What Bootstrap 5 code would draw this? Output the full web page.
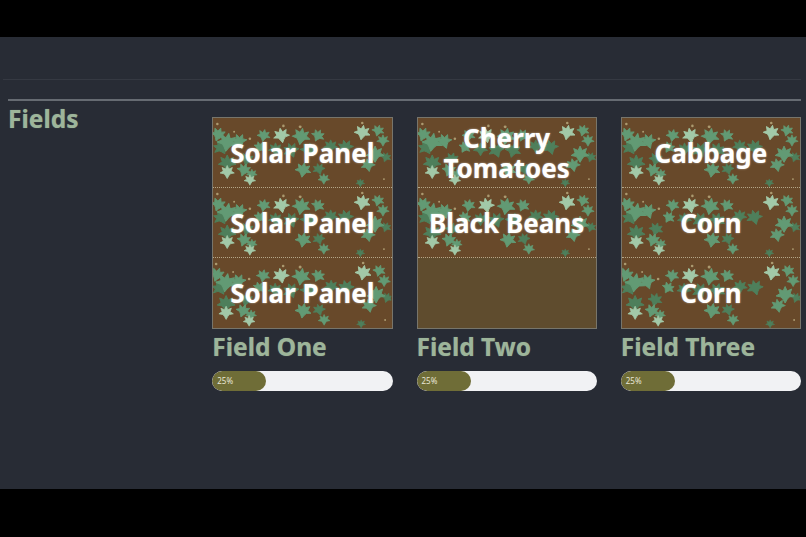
<!doctype html>
<html lang="en"><head><meta charset="utf-8"><title>Fields</title>
<link href="https://cdn.jsdelivr.net/npm/bootstrap@5.3.0/dist/css/bootstrap.min.css" rel="stylesheet">
<style>
html,body{height:100%;overflow:hidden}
body{background:#000;font-family:"Noto Sans","Liberation Sans",sans-serif;padding:37px 0 48px}
.stage{height:100%;background:#282c35;padding:0 5px 0 8px}
.rule-top{margin:0 0 19px -5px;border-top:1px solid #353942;opacity:1}
.rule-main{margin:0 0 2px;border-top:2px solid #666b72;opacity:1}
.spacer{height:42px}
.side-title{color:#9db59a;font-size:24.500px;font-weight:700;line-height:32px;margin:0;text-shadow:0 0 1px rgba(157,181,154,.6)}
.plot{margin-top:14px;border:1px solid #77756b;background:#5f4c2e}
.bed{height:70px;position:relative;border-bottom:1px dotted #b5a789}
.bed:last-child{border-bottom:0}
.bed.sown{background:#68492a}
.ivy{position:absolute;inset:0;width:100%;height:100%;filter:blur(.45px)}
.ivy-leaf{stroke-width:1;stroke-linejoin:round}
.crop{position:relative;height:100%;padding:0 4px;color:#fff;font-weight:700;font-size:26px;line-height:30px;text-align:center;text-shadow:0 0 2px rgba(255,255,255,.6)}
.field-name{color:#9db59a;font-size:24.500px;font-weight:700;line-height:32px;margin:2px 0 8px 0;text-shadow:0 0 1px rgba(157,181,154,.6)}
.meter{height:20px;background:#f1f2f4;border-radius:10px;font-size:8px}
.meter .progress-bar{background:#6f6d37;color:#e8e6d6;align-items:flex-start;padding-left:5px;border-radius:10px}
</style></head><body>
<svg width="0" height="0" class="d-block"><defs>
<path id="lf" class="ivy-leaf" stroke="currentColor" fill="currentColor" d="M0-8.500 2-4 6.500-6 5-1.500 9 1 4 2 2 4.500 0 8-2 4.500-4 2-9 1-5-1.500-6.500-6-2-4Z"/>
<symbol id="ivy" viewBox="0 0 178 70">
<g color="#4e7f5b">
<use href="#lf" transform="translate(7 30) rotate(-30) scale(.9)"/>
<use href="#lf" transform="translate(13 46) scale(1)"/>
<use href="#lf" transform="translate(33 42) rotate(15) scale(.8)"/>
<use href="#lf" transform="translate(62 32) scale(.8)"/>
<use href="#lf" transform="translate(78 33) rotate(-20) scale(.9)"/>
<use href="#lf" transform="translate(95 33) rotate(15) scale(.9)"/>
<use href="#lf" transform="translate(118 29) scale(.8)"/>
<use href="#lf" transform="translate(133 30) rotate(-15) scale(.9)"/>
<use href="#lf" transform="translate(106 52) rotate(-15) scale(.7)"/>
<use href="#lf" transform="translate(148 66) scale(.5)"/>
<use href="#lf" transform="translate(174 40) rotate(20) scale(.6)"/>
</g>
<g color="#629a74">
<use href="#lf" transform="translate(4 17) rotate(20) scale(.85)"/>
<use href="#lf" transform="translate(13 25) rotate(10) scale(1.1)"/>
<use href="#lf" transform="translate(25 24) rotate(-20) scale(.9)"/>
<use href="#lf" transform="translate(50 18) rotate(10) scale(.75)"/>
<use href="#lf" transform="translate(88 19) rotate(10) scale(1)"/>
<use href="#lf" transform="translate(105 18) rotate(25) scale(.75)"/>
<use href="#lf" transform="translate(46 30) rotate(30) scale(.7)"/>
<use href="#lf" transform="translate(30 53) rotate(20) scale(.8)"/>
<use href="#lf" transform="translate(38 57) scale(.6)"/>
<use href="#lf" transform="translate(90 53) rotate(10) scale(.9)"/>
<use href="#lf" transform="translate(111 62) scale(.65)"/>
<use href="#lf" transform="translate(156 48) rotate(-10) scale(.8)"/>
<use href="#lf" transform="translate(166 13) rotate(15) scale(.7)"/>
<use href="#lf" transform="translate(171 23) scale(.7)"/>
<use href="#lf" transform="translate(163 37) scale(1)"/>
</g>
<g color="#a2c9a8">
<use href="#lf" transform="translate(13 55) scale(.8)"/>
<use href="#lf" transform="translate(36 63) scale(.65)"/>
<use href="#lf" transform="translate(68 18) rotate(-10) scale(.9)"/>
<use href="#lf" transform="translate(150 15) rotate(10) scale(.9)"/>
</g>
<g fill="#ab9a70">
<circle cx="3" cy="6" r="1.300"/><circle cx="70" cy="8" r="1.300"/><circle cx="87" cy="9" r="1.500"/><circle cx="150" cy="5" r="1.300"/><circle cx="36" cy="21" r="1.300"/><circle cx="20" cy="14" r="1"/><circle cx="172" cy="62" r="1"/>
</g>
</symbol></defs></svg>
<main class="stage">
<div class="spacer"></div>
<hr class="rule-top">
<hr class="rule-main">
<div class="row">
<div class="col-3"><h1 class="side-title">Fields</h1></div>

<div class="col-3">
<div class="plot">
<div class="bed sown"><svg class="ivy" aria-hidden="true"><use href="#ivy"/></svg><div class="crop d-flex align-items-center justify-content-center">Solar Panel</div></div>
<div class="bed sown"><svg class="ivy" aria-hidden="true"><use href="#ivy"/></svg><div class="crop d-flex align-items-center justify-content-center">Solar Panel</div></div>
<div class="bed sown"><svg class="ivy" aria-hidden="true"><use href="#ivy"/></svg><div class="crop d-flex align-items-center justify-content-center">Solar Panel</div></div>
</div>
<h2 class="field-name">Field One</h2>
<div class="progress meter"><div class="progress-bar" style="width:30%">25%</div></div>
</div>

<div class="col-3">
<div class="plot">
<div class="bed sown"><svg class="ivy" aria-hidden="true"><use href="#ivy"/></svg><div class="crop d-flex align-items-center justify-content-center">Cherry Tomatoes</div></div>
<div class="bed sown"><svg class="ivy" aria-hidden="true"><use href="#ivy"/></svg><div class="crop d-flex align-items-center justify-content-center">Black Beans</div></div>
<div class="bed"></div>
</div>
<h2 class="field-name">Field Two</h2>
<div class="progress meter"><div class="progress-bar" style="width:30%">25%</div></div>
</div>

<div class="col-3">
<div class="plot">
<div class="bed sown"><svg class="ivy" aria-hidden="true"><use href="#ivy"/></svg><div class="crop d-flex align-items-center justify-content-center">Cabbage</div></div>
<div class="bed sown"><svg class="ivy" aria-hidden="true"><use href="#ivy"/></svg><div class="crop d-flex align-items-center justify-content-center">Corn</div></div>
<div class="bed sown"><svg class="ivy" aria-hidden="true"><use href="#ivy"/></svg><div class="crop d-flex align-items-center justify-content-center">Corn</div></div>
</div>
<h2 class="field-name">Field Three</h2>
<div class="progress meter"><div class="progress-bar" style="width:30%">25%</div></div>
</div>
</div>
</main>
<script src="https://cdn.jsdelivr.net/npm/bootstrap@5.3.0/dist/js/bootstrap.bundle.min.js"></script>
</body></html>
